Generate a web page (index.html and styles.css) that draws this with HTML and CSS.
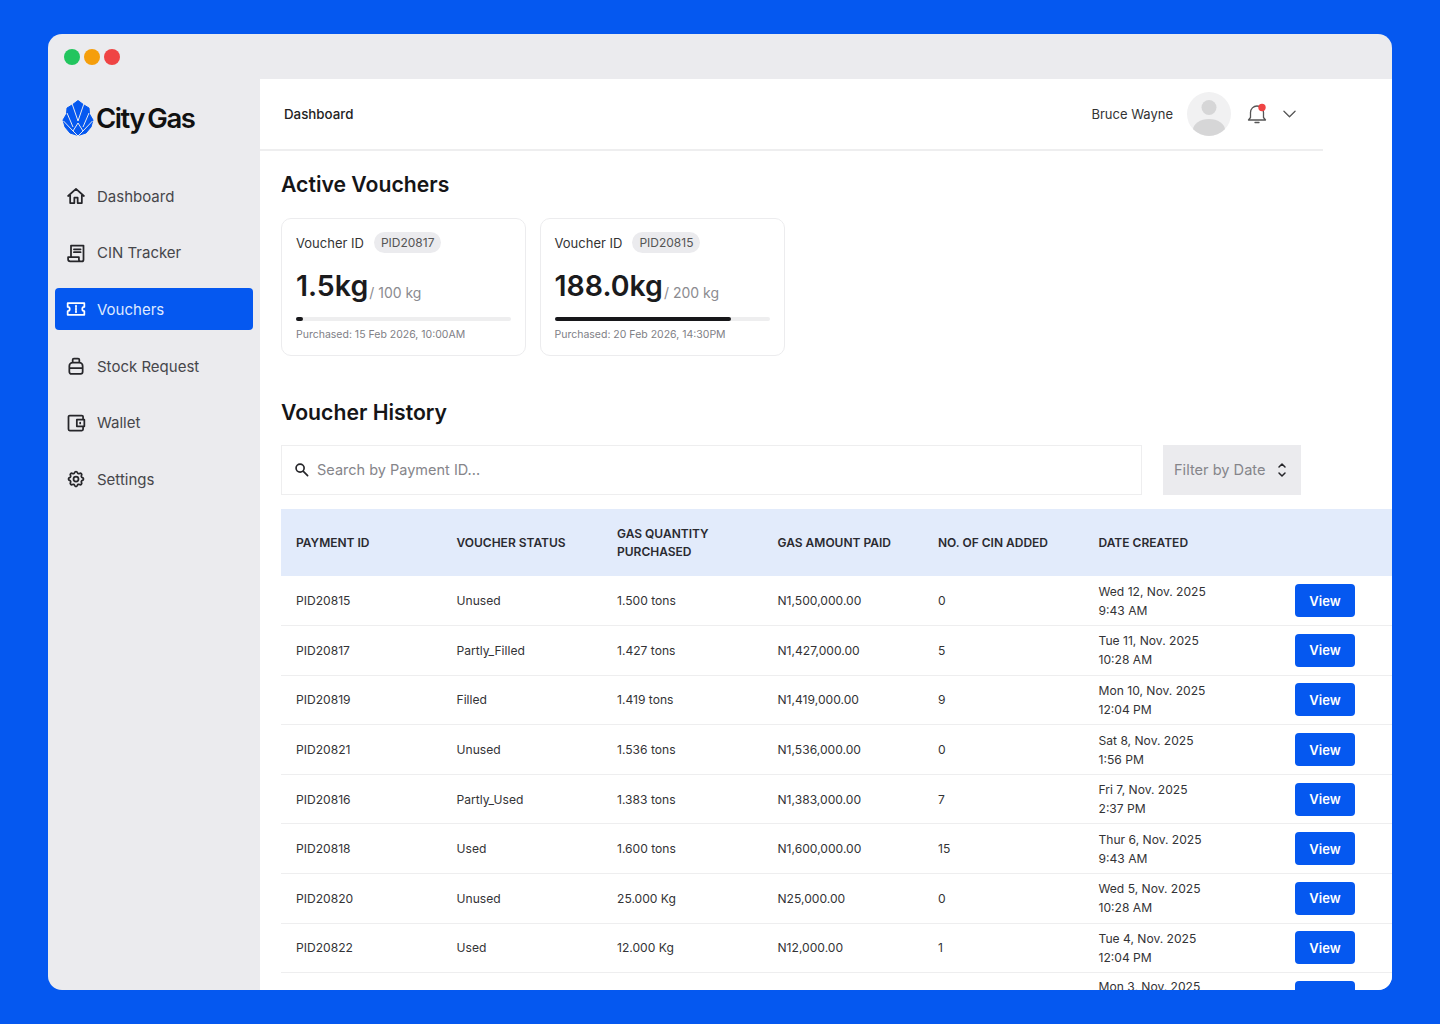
FILE: index.html
```html
<!DOCTYPE html>
<html lang="en">
<head>
<meta charset="utf-8">
<title>City Gas</title>
<link rel="stylesheet" href="styles.css">
</head>
<body>
<div class="window">
  <div class="titlebar">
    <span class="dot green"></span><span class="dot orange"></span><span class="dot red"></span>
  </div>
  <div class="body">
    <aside class="sidebar">
      <div class="logo">
        <svg class="logo-mark" viewBox="0 0 32 36" aria-hidden="true">
          <path class="mark-fill" d="M16 .5 L22 5 L27 8 L27.500 14 L31 20 L29 27 L24 33 L16 35.500 L8 33 L3 27 L1 20 L4.500 14 L5 8 L10 5 Z"/>
          <path class="mark-gap" d="M10 3.500 L16 21 L22 3.500 M5 13 L11 27 M27 13 L21 27 M1.500 21 L11 31 L16 23 L21 31 L30.500 21 M11 31 L16 36 L21 31"/>
        </svg>
        <span class="logo-text">City Gas</span>
      </div>
      <nav class="nav">
        <a class="nav-item">
          <svg class="nav-icon" viewBox="0 0 24 24"><path d="M2.500 12 12 3.500 21.500 12M5 10v10.500h5V14h4v6.500h5V10"/></svg>
          <span>Dashboard</span>
        </a>
        <a class="nav-item">
          <svg class="nav-icon" viewBox="0 0 24 24"><path d="M6 16V3h15v17a2 2 0 0 1-2 2H5a2.500 2.500 0 0 1-2.500-2.500V17h13v3a2 2 0 0 0 2 2M9.500 7.500h8M9.500 11h8"/></svg>
          <span>CIN Tracker</span>
        </a>
        <a class="nav-item active">
          <svg class="nav-icon" viewBox="0 0 24 24"><path d="M2 5h20v4.500a2.500 2.500 0 0 0 0 5V19H2v-4.500a2.500 2.500 0 0 0 0-5ZM12 8v1.500M12 11.300v1.500M12 14.500V16"/></svg>
          <span>Vouchers</span>
        </a>
        <a class="nav-item">
          <svg class="nav-icon" viewBox="0 0 24 24"><path d="M8 8V4.500A1.500 1.500 0 0 1 9.500 3h5A1.500 1.500 0 0 1 16 4.500V8M8 8h8a4 4 0 0 1 4 4v7a2.500 2.500 0 0 1-2.500 2.500h-11A2.500 2.500 0 0 1 4 19v-7a4 4 0 0 1 4-4ZM4 14.500h16"/></svg>
          <span>Stock Request</span>
        </a>
        <a class="nav-item">
          <svg class="nav-icon" viewBox="0 0 24 24"><path d="M20.500 8V4.500a1.500 1.500 0 0 0-1.500-1.500H4.500A1.500 1.500 0 0 0 3 4.500v15A1.500 1.500 0 0 0 4.500 21H19a1.500 1.500 0 0 0 1.500-1.500V16M13 8h9v8h-9ZM17 11.500v1"/></svg>
          <span>Wallet</span>
        </a>
        <a class="nav-item">
          <svg class="nav-icon" viewBox="0 0 24 24"><path d="M10.325 4.317c.426-1.756 2.924-1.756 3.350 0a1.724 1.724 0 0 0 2.573 1.066c1.543-.94 3.310.826 2.370 2.370a1.724 1.724 0 0 0 1.065 2.572c1.756.426 1.756 2.924 0 3.350a1.724 1.724 0 0 0-1.066 2.573c.94 1.543-.826 3.310-2.370 2.370a1.724 1.724 0 0 0-2.572 1.065c-.426 1.756-2.924 1.756-3.350 0a1.724 1.724 0 0 0-2.573-1.066c-1.543.94-3.310-.826-2.370-2.370a1.724 1.724 0 0 0-1.065-2.572c-1.756-.426-1.756-2.924 0-3.350a1.724 1.724 0 0 0 1.066-2.573c-.94-1.543.826-3.310 2.370-2.370.996.608 2.296.07 2.572-1.065z"/><circle cx="12" cy="12" r="3"/></svg>
          <span>Settings</span>
        </a>
      </nav>
    </aside>
    <main class="main">
      <header class="topbar">
        <span class="crumb">Dashboard</span>
        <div class="user">
          <span class="user-name">Bruce Wayne</span>
          <svg class="avatar" viewBox="0 0 44 44" aria-hidden="true">
            <defs><clipPath id="av"><circle cx="22" cy="22" r="22"/></clipPath></defs>
            <circle cx="22" cy="22" r="22" fill="#f1f1f2"/>
            <g clip-path="url(#av)" fill="#d6d6d7"><circle cx="22" cy="15.500" r="7.500"/><ellipse cx="22" cy="38" rx="16" ry="11"/></g>
          </svg>
          <svg class="bell" viewBox="0 0 22 22" aria-hidden="true">
            <path class="bell-line" d="M4.500 14.500V9.500a6.500 6.500 0 0 1 13 0v5l2 2.500H2.500ZM9 19.500h4"/>
            <circle cx="16" cy="4.500" r="3.700" fill="#ef4444"/>
          </svg>
          <svg class="chev" viewBox="0 0 14 8" aria-hidden="true"><path d="M1 1l6 6 6-6"/></svg>
        </div>
      </header>
      <div class="content">
        <h1 class="section-title">Active Vouchers</h1>
        <div class="cards">
          <article class="card">
            <div class="card-head"><span>Voucher ID</span><span class="pill">PID20817</span></div>
            <div class="amount"><strong>1.5kg</strong><span>/ 100 kg</span></div>
            <div class="track"><div class="fill" style="width:3.2%"></div></div>
            <div class="purchased">Purchased: 15 Feb 2026, 10:00AM</div>
          </article>
          <article class="card">
            <div class="card-head"><span>Voucher ID</span><span class="pill">PID20815</span></div>
            <div class="amount"><strong>188.0kg</strong><span>/ 200 kg</span></div>
            <div class="track"><div class="fill" style="width:82%"></div></div>
            <div class="purchased">Purchased: 20 Feb 2026, 14:30PM</div>
          </article>
        </div>
        <h2 class="section-title history">Voucher History</h2>
        <div class="tools">
          <div class="search">
            <svg class="search-icon" viewBox="0 0 16 16" aria-hidden="true"><circle cx="6.500" cy="6.500" r="4.300"/><path d="M10 10l4.500 4.500"/></svg>
            <span>Search by Payment ID...</span>
          </div>
          <div class="filter">
            <span>Filter by Date</span>
            <svg class="updown" viewBox="0 0 10 16" aria-hidden="true"><path d="M2 5l3-3 3 3M2 11l3 3 3-3"/></svg>
          </div>
        </div>
        <table class="table">
          <thead>
            <tr><th>PAYMENT ID</th><th>VOUCHER STATUS</th><th>GAS QUANTITY<br>PURCHASED</th><th>GAS AMOUNT PAID</th><th>NO. OF CIN ADDED</th><th>DATE CREATED</th><th></th></tr>
          </thead>
          <tbody>
            <tr><td>PID20815</td><td>Unused</td><td>1.500 tons</td><td>N1,500,000.00</td><td>0</td><td>Wed 12, Nov. 2025<br>9:43 AM</td><td><button class="view">View</button></td></tr>
            <tr><td>PID20817</td><td>Partly_Filled</td><td>1.427 tons</td><td>N1,427,000.00</td><td>5</td><td>Tue 11, Nov. 2025<br>10:28 AM</td><td><button class="view">View</button></td></tr>
            <tr><td>PID20819</td><td>Filled</td><td>1.419 tons</td><td>N1,419,000.00</td><td>9</td><td>Mon 10, Nov. 2025<br>12:04 PM</td><td><button class="view">View</button></td></tr>
            <tr><td>PID20821</td><td>Unused</td><td>1.536 tons</td><td>N1,536,000.00</td><td>0</td><td>Sat 8, Nov. 2025<br>1:56 PM</td><td><button class="view">View</button></td></tr>
            <tr><td>PID20816</td><td>Partly_Used</td><td>1.383 tons</td><td>N1,383,000.00</td><td>7</td><td>Fri 7, Nov. 2025<br>2:37 PM</td><td><button class="view">View</button></td></tr>
            <tr><td>PID20818</td><td>Used</td><td>1.600 tons</td><td>N1,600,000.00</td><td>15</td><td>Thur 6, Nov. 2025<br>9:43 AM</td><td><button class="view">View</button></td></tr>
            <tr><td>PID20820</td><td>Unused</td><td>25.000 Kg</td><td>N25,000.00</td><td>0</td><td>Wed 5, Nov. 2025<br>10:28 AM</td><td><button class="view">View</button></td></tr>
            <tr><td>PID20822</td><td>Used</td><td>12.000 Kg</td><td>N12,000.00</td><td>1</td><td>Tue 4, Nov. 2025<br>12:04 PM</td><td><button class="view">View</button></td></tr>
            <tr class="partial"><td></td><td></td><td></td><td></td><td></td><td>Mon 3, Nov. 2025</td><td><button class="view empty" aria-label="View"></button></td></tr>
          </tbody>
        </table>
      </div>
    </main>
  </div>
</div>
</body>
</html>
```
FILE: styles.css
```css
* { box-sizing: border-box; }
html, body { margin: 0; height: 100%; }
body {
  background: #0558f0;
  padding: 34px 48px;
  font-family: Inter, "Open Sans", sans-serif;
  color: #1d1d1f;
  overflow: hidden;
}
.window {
  height: 956px;
  background: #ebebee;
  border-radius: 14px;
  overflow: hidden;
  display: flex;
  flex-direction: column;
}
.titlebar {
  height: 45px;
  flex: none;
  display: flex;
  align-items: center;
  gap: 4px;
  padding: 0 0 0 16px;
}
.dot { width: 16px; height: 16px; border-radius: 50%; }
.green { background: #22c55e; }
.orange { background: #f59e0b; }
.red { background: #ef4444; }
.body { flex: 1; display: flex; min-height: 0; }
.sidebar { width: 212px; flex: none; padding: 21px 7px 0; }
.logo { display: flex; align-items: center; gap: 2px; height: 36px; padding-left: 7px; }
.logo-mark { width: 32px; height: 36px; flex: none; }
.mark-fill { fill: #0558f0; stroke: #0558f0; stroke-width: 1; stroke-linejoin: round; }
.mark-gap { fill: none; stroke: #ebebee; stroke-width: 1; stroke-linejoin: round; }
.logo-text {
  font-size: 27.500px;
  font-weight: 600;
  letter-spacing: -1.500px;
  color: #111;
  word-spacing: -2px;
}
.nav { display: flex; flex-direction: column; gap: 14.700px; margin-top: 39px; }
.nav-item {
  height: 42px;
  display: flex;
  align-items: center;
  gap: 11px;
  padding-left: 11px;
  border-radius: 4px;
  font-size: 15px;
  color: #46464a;
}
.nav-icon {
  width: 20px;
  height: 20px;
  flex: none;
  fill: none;
  stroke: #26262a;
  stroke-width: 2.100;
  stroke-linejoin: round;
  stroke-linecap: round;
}
.active { background: #0558f0; color: #dfe9ff; }
.active .nav-icon { stroke: #fff; }
.main { flex: 1; min-width: 0; background: #fff; overflow: hidden; }
.topbar {
  width: 1063px;
  height: 72px;
  border-bottom: 2px solid #eeeeef;
  display: flex;
  align-items: center;
  justify-content: space-between;
  padding: 0 27px 0 24px;
}
.crumb { font-size: 13.300px; font-weight: 500; color: #222; }
.user { display: flex; align-items: center; }
.user-name { font-size: 13px; color: #333; margin-right: 14px; }
.avatar { width: 44px; height: 44px; margin-right: 15px; }
.bell { width: 22px; height: 22px; margin-right: 15px; }
.bell-line { fill: none; stroke: #555; stroke-width: 1.300; stroke-linejoin: round; stroke-linecap: round; }
.chev { width: 13px; height: 8px; fill: none; stroke: #555; stroke-width: 1.400; stroke-linecap: round; stroke-linejoin: round; }
.content { padding: 18px 0 0 21px; }
.section-title { margin: 0; font-size: 21.200px; line-height: 30px; font-weight: 600; color: #151517; }
.cards { display: flex; gap: 13.500px; margin-top: 19px; }
.card {
  width: 245px;
  height: 138px;
  border: 1px solid #ececee;
  border-radius: 10px;
  padding: 13px 14px 0;
}
.card-head { display: flex; align-items: center; gap: 10px; font-size: 13px; color: #333; }
.pill { background: #ebebee; border-radius: 11px; height: 21px; line-height: 21px; padding: 0 7px; color: #555; font-size: 12px; }
.amount { display: flex; align-items: baseline; gap: 1px; margin-top: 12px; height: 42px; line-height: 42px; }
.amount strong { font-size: 28.500px; font-weight: 600; color: #1b1b1d; }
.amount span { font-size: 14px; color: #8b8b90; align-self: flex-end; line-height: 28px; }
.track { height: 4px; border-radius: 2px; background: #eeeeef; margin-top: 10px; }
.fill { height: 4px; border-radius: 2px; background: #17171a; }
.purchased { font-size: 10.500px; color: #808086; margin-top: 7px; }
.history { margin-top: 41px; }
.tools { display: flex; gap: 21px; margin-top: 18px; }
.search {
  width: 861px;
  height: 50px;
  border: 1px solid #eeeeef;
  display: flex;
  align-items: center;
  gap: 8px;
  padding: 0 0 2px 12px;
  font-size: 14.500px;
  color: #85858a;
}
.search-icon { width: 15px; height: 15px; fill: none; stroke: #26262a; stroke-width: 1.800; stroke-linecap: round; }
.filter {
  width: 138px;
  height: 50px;
  background: #ebebee;
  display: flex;
  align-items: center;
  gap: 12px;
  padding-left: 11px;
  font-size: 14.600px;
  color: #85858a;
}
.updown { width: 10px; height: 16px; fill: none; stroke: #26262a; stroke-width: 1.500; stroke-linecap: round; stroke-linejoin: round; }
.table {
  width: 1111px;
  margin-top: 14px;
  border-collapse: collapse;
  table-layout: fixed;
  font-size: 12.100px;
}
.table th {
  width: 160.500px;
  height: 67px;
  background: #e2ebfb;
  text-align: left;
  font-size: 12px;
  line-height: 18px;
  font-weight: 600;
  color: #2a2a30;
  padding: 0 15px;
}
.table th:last-child { width: 148px; }
.table td {
  height: 49.600px;
  border-bottom: 1.500px solid #eeeeef;
  padding: 0 15px;
  color: #333336;
  line-height: 19px;
}
.table td:last-child { padding: 0 0 0 51px; }
.table .partial td { vertical-align: top; padding-top: 4px; border-bottom: 0; }
.table .partial td:last-child { padding-top: 8px; }
.view {
  width: 60px;
  height: 33px;
  background: #0558f0;
  border: 0;
  border-radius: 4px;
  color: #fff;
  font-family: inherit;
  font-size: 13px;
  font-weight: 600;
  display: block;
}
```
